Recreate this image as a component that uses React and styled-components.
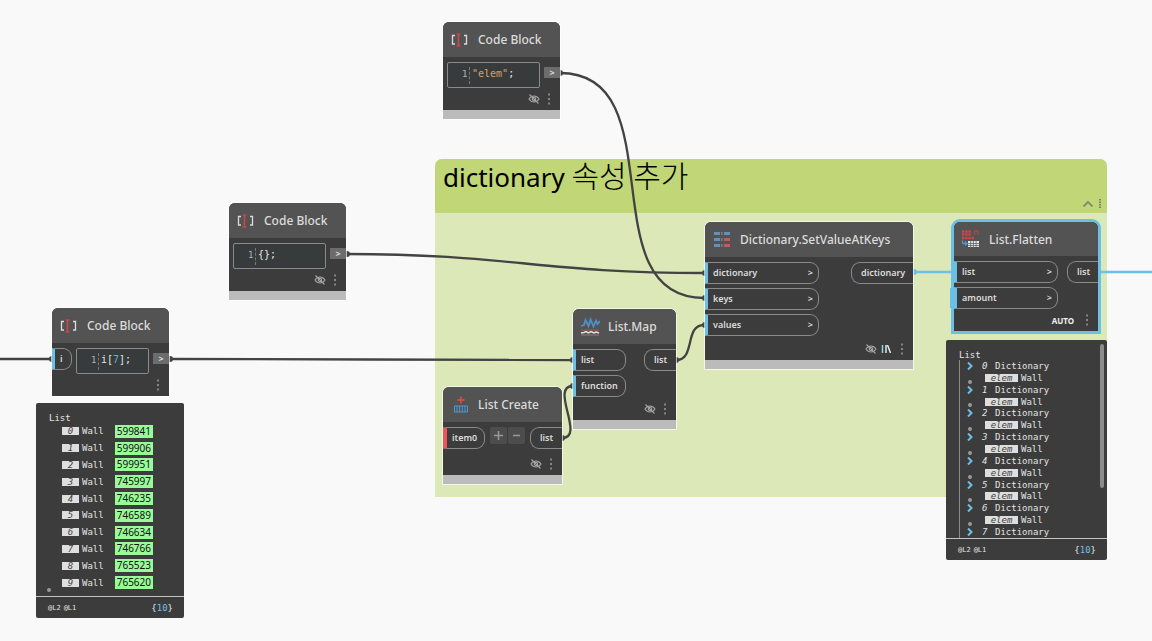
import React from "react";
import styled, { createGlobalStyle, css } from "styled-components";

const color = {
  canvas: "#f9f9f9",
  header: "#535353",
  body: "#3c3c3c",
  footer: "#bbbbbb",
  line: "#8a8a8a",
  text: "#dcdcdc",
  blue: "#6ac0e7",
  red: "#eb5555",
  wire: "#434343",
};
const sans = `"Noto Sans", "Noto Sans CJK KR", sans-serif`;
const mono = `"DejaVu Sans Mono", "Liberation Mono", monospace`;

const GlobalStyle = createGlobalStyle`
  * { box-sizing: border-box; }
  body { margin: 0; background: ${color.canvas}; font-family: ${sans}; }
  button { font: inherit; color: inherit; border: 0; padding: 0; margin: 0; background: none; cursor: pointer; }
`;

const Canvas = styled.main`
  position: relative;
  min-height: 100vh;
  overflow: hidden;
`;

const Wires = styled.svg`
  position: absolute;
  left: 0;
  top: 0;
  width: 100%;
  height: 100%;
  overflow: visible;
  fill: none;
  stroke: ${color.wire};
  stroke-width: 2.3;
  pointer-events: none;
`;

const placed = css`
  position: absolute;
  left: ${(p) => p.$x}px;
  top: ${(p) => p.$y}px;
  width: ${(p) => p.$w}px;
`;

/* ---------- group ---------- */
const GroupBox = styled.section`
  ${placed}
  border-radius: 7px 7px 0 0;
  background: #dce8b8;
`;
const GroupHeader = styled.header`
  display: flex;
  justify-content: space-between;
  height: 54px;
  padding: 0 5px 0 8px;
  border-radius: 7px 7px 0 0;
  background: #c1d676;
`;
const GroupTitle = styled.h1`
  margin: 0;
  font-size: 26px;
  font-weight: 400;
  line-height: 30px;
  color: #000;
  white-space: nowrap;
`;
const Hangul = styled.span`
  font-family: "Noto Sans CJK KR", sans-serif;
  font-size: 30px;
  font-weight: 300;
`;
const GroupTools = styled.div`
  display: flex;
  align-items: center;
  align-self: flex-end;
  gap: 4px;
  height: 18px;
`;
const GroupArea = styled.div`
  height: 284px;
`;

/* ---------- node ---------- */
const NodeBox = styled.article`
  ${placed}
  border-radius: 6px 6px 0 0;
  background: ${color.body};
  color: ${color.text};
  box-shadow: 0 0 0 ${(p) => (p.$selected ? `3px ${color.blue}` : "1px rgba(255,255,255,0.65)")};
`;
const NodeHeader = styled.header`
  display: flex;
  align-items: center;
  gap: 8px;
  height: ${(p) => (p.$selected ? 34 : 35)}px;
  padding-left: 7px;
  border-radius: 6px 6px 0 0;
  background: ${color.header};
`;
const NodeTitle = styled.h2`
  margin: 0;
  font-size: 12px;
  font-weight: 500;
  white-space: nowrap;
`;
const NodeBody = styled.div`
  display: flex;
  flex-direction: column;
  justify-content: space-between;
  min-height: ${(p) => p.$h}px;
  padding-top: 5px;
`;
const NodeFooter = styled.div`
  height: 9px;
  background: ${color.footer};
`;
const Ports = styled.div`
  display: flex;
  align-items: flex-start;
  justify-content: space-between;
`;
const PortColumn = styled.div`
  display: flex;
  flex-direction: column;
  gap: 4px;
`;
const Port = styled.button`
  display: flex;
  align-items: center;
  justify-content: space-between;
  width: ${(p) => p.$w}px;
  height: 22px;
  padding: 0 5px 0 ${(p) => (p.$out ? 9 : 5)}px;
  border: 1px solid ${color.line};
  font-size: 9px;
  font-weight: 600;
  line-height: 12px;
  white-space: nowrap;
  ${(p) =>
    p.$out
      ? css`
          border-right: 0;
          border-radius: 9px 0 0 9px;
        `
      : css`
          border-left: ${p.$wide ? 4 : 3}px solid ${p.$missing ? color.red : color.blue};
          border-radius: 0 9px 9px 0;
        `}
`;
const StatusRow = styled.div`
  display: flex;
  align-items: center;
  justify-content: flex-end;
  gap: 4px;
  height: 22px;
  padding-right: 6px;
`;
const Lacing = styled.span`
  margin-right: 4px;
  font-size: 8px;
  font-weight: 700;
  color: #f0f0f0;
`;
const IconButton = styled.button`
  display: flex;
  align-items: center;
  justify-content: center;
  color: ${(p) => p.$tone || "#a5a5a5"};
`;
const CountButtons = styled.div`
  display: flex;
  gap: 1px;
`;
const CountButton = styled.button`
  display: flex;
  align-items: center;
  justify-content: center;
  width: 17px;
  height: 17px;
  border-radius: 2px;
  background: #4d4d4d;
  color: #999;
`;

/* ---------- code block ---------- */
const CodeRow = styled.div`
  display: flex;
  align-items: flex-start;
  gap: 4px;
  padding-left: ${(p) => (p.$input ? 0 : 4)}px;
`;
const Editor = styled.div`
  display: flex;
  flex: 1;
  height: 26px;
  padding: 4px 0 3px 14px;
  border: 1px solid ${color.line};
  border-radius: 2px;
  background: #383b3b;
  font-family: ${mono};
  font-size: 10px;
  line-height: 14px;
`;
const LineNumber = styled.span`
  width: 8px;
  height: 17px;
  border-right: 1px dashed #777;
  font-size: 9px;
  color: #a9b4c0;
`;
const Code = styled.code`
  padding-left: 2px;
  font-family: inherit;
  color: #e4e4e4;
  outline: 0;
`;
const Tint = styled.span`
  color: ${(p) => p.$c};
`;
const CodeOut = styled.button`
  width: 16px;
  height: 11px;
  margin-top: 5px;
  background: #6c6c6c;
  font-size: 9px;
  font-weight: 700;
  line-height: 11px;
`;

/* ---------- preview ---------- */
const Preview = styled.section`
  ${placed}
  border-radius: 2px;
  background: ${color.body};
  color: #e4e4e4;
  font-family: ${mono};
  font-size: 9px;
  line-height: 10px;
`;
const PreviewBody = styled.div`
  position: relative;
  height: ${(p) => p.$h}px;
  padding: 10px 12px 0 13px;
  border-bottom: 1px solid #c4c4c4;
`;
const PreviewFooter = styled.footer`
  display: flex;
  align-items: center;
  justify-content: space-between;
  height: 21px;
  padding: 0 11px 0 12px;
`;
const Levels = styled.span`
  display: flex;
  gap: 3px;
  font-size: 7px;
`;
const Rows = styled.ul`
  display: flex;
  flex-direction: column;
  height: ${(p) => p.$h}px;
  margin: 0;
  padding: 0 0 0 ${(p) => p.$indent}px;
  list-style: none;
  border-left: ${(p) => (p.$ruled ? "1px solid #8a8a8a" : "0")};
`;
const Row = styled.li`
  display: flex;
  flex: 1;
  align-items: center;
  gap: 3px;
  padding-left: ${(p) => p.$indent || 0}px;
`;
const Chip = styled.span`
  width: ${(p) => p.$w}px;
  height: 8px;
  background: #dedede;
  color: #444;
  font-style: italic;
  line-height: 8px;
  text-align: center;
`;
const IdLink = styled.a`
  height: 13px;
  margin-left: 8px;
  padding: 0 2px;
  background: #98fb98;
  color: #111;
  font-family: ${sans};
  font-size: 10px;
  line-height: 13px;
  text-decoration: none;
`;
const Index = styled.em`
  width: 6px;
  margin: 0 4px 0 5px;
`;
const Bullet = styled.span`
  position: absolute;
  left: ${(p) => p.$x}px;
  bottom: ${(p) => p.$b}px;
  width: 4px;
  height: 4px;
  border-radius: 50%;
  background: #999;
`;
const NestedRow = styled(Row)`
  position: relative;
`;
const ScrollThumb = styled.div`
  position: absolute;
  top: 4px;
  right: 3px;
  width: 4px;
  height: 144px;
  border-radius: 2px;
  background: #8c8c8c;
`;

/* ---------- icons ---------- */
const Icon = ({ children, w = 20, h = 20 }) => (
  <svg width={w} height={h} viewBox={`0 0 ${w} ${h}`} fill="none" aria-hidden="true">
    {children}
  </svg>
);
const CodeBlockIcon = () => (
  <Icon>
    <path d="M5 5.500H2.500v8.500H5M14 5.500h2.500v8.500H14" stroke="#dcdcdc" strokeWidth="1.300" />
    <path d="M8.500 4v12M6.500 4h4M6.500 16h4" stroke="#c8474a" strokeWidth="1.600" />
  </Icon>
);
const ListCreateIcon = () => (
  <Icon>
    <path d="M11 1.500v7M7.500 5h7" stroke="#d24a4d" strokeWidth="1.800" />
    <path d="M4.500 11h13v6h-13zM7 11v6M9.700 11v6M12.300 11v6M15 11v6" stroke="#4f97d3" />
  </Icon>
);
const ListMapIcon = () => (
  <Icon>
    <path d="M1 9l3-1 1.500-5 3 6 2-6.500 3 7 2.500-6 1.500 3.500L20 4" stroke="#4f8fc8" strokeWidth="1.800" />
    <path d="M1 13h18" stroke="#a65b5b" />
    <path d="M1 16l3-.5 2-1 2.500 1.500 2.500-1.500 3 1.500 2-1 3 1" stroke="#e4e4e4" strokeWidth="1.500" />
    <path d="M1 18h18" stroke="#9a7676" />
  </Icon>
);
const DictionaryIcon = () => (
  <Icon>
    {[2, 8, 14].map((y) => (
      <g key={y}>
        <rect x="2" y={y} width="6" height="3" fill="#6490ba" />
        <rect x="9" y={y} width="1.500" height="3" fill="#7a8087" />
        <rect x="12" y={y} width="6" height="3" fill={y === 2 ? "#6490ba" : "#b36262"} />
      </g>
    ))}
  </Icon>
);
const FlattenIcon = () => (
  <Icon>
    <path d="M1 2.500h9M1 5.500h9M1 9h12" stroke="#cf4548" strokeWidth="2.400" strokeDasharray="2.400 .8" />
    <path d="M13.500 6V2H17v4" stroke="#a84a4c" strokeWidth="1.300" />
    <path d="M1.500 11.500v2q0 1 1 1H6M4 12.500l2 2-2 2" stroke="#4f97d3" strokeWidth="1.300" />
    <rect x="7" y="12" width="11" height="6" fill="#e8e8e8" />
    <path d="M7 14.500h11M7 16.500h11M9.700 12v6M12.400 12v6M15.100 12v6" stroke="#555" strokeWidth=".7" />
  </Icon>
);
const EyeOff = () => (
  <Icon w={12} h={12}>
    <path d="M1 6q2-3 5-3t5 3q-2 3-5 3T1 6z" stroke="currentColor" strokeWidth="1.100" />
    <circle cx="6" cy="6" r="1.700" stroke="currentColor" strokeWidth="1.100" />
    <path d="M1.500 1.500l9 9" stroke="currentColor" strokeWidth="1.100" />
  </Icon>
);
const Dots = () => (
  <Icon w={10} h={14}>
    {[1.5, 6, 10.5].map((y) => (
      <rect key={y} x="4" y={y} width="2" height="2" fill="currentColor" />
    ))}
  </Icon>
);
const LacingIcon = () => (
  <Icon w={12} h={8}>
    <path d="M1.500 0v8" stroke="#8fd3ef" strokeWidth="1.500" />
    <path d="M5 0v8M6.500 0l3 8" stroke="#f0f0f0" strokeWidth="1.400" />
  </Icon>
);

/* ---------- composed parts ---------- */
const Menu = () => (
  <IconButton aria-label="Node options" $tone="#858585">
    <Dots />
  </IconButton>
);
const Hidden = () => (
  <IconButton aria-label="Toggle preview">
    <EyeOff />
  </IconButton>
);

function Node({ x, y, w, h, title, icon, selected, footer = true, status, children }) {
  return (
    <NodeBox $x={x} $y={y} $w={w} $selected={selected}>
      <NodeHeader $selected={selected}>
        {icon}
        <NodeTitle>{title}</NodeTitle>
      </NodeHeader>
      <NodeBody $h={h}>
        {children}
        <StatusRow>
          {status}
          <Menu />
        </StatusRow>
      </NodeBody>
      {footer && <NodeFooter />}
    </NodeBox>
  );
}

function CodeBlock({ input, children, ...rest }) {
  return (
    <Node w={117} title="Code Block" icon={<CodeBlockIcon />} {...rest}>
      <CodeRow $input={input}>
        {input && <Port $w={20}>{input}</Port>}
        <Editor>
          <LineNumber>1</LineNumber>
          <Code contentEditable suppressContentEditableWarning role="textbox" aria-label="Code" spellCheck={false}>
            {children}
          </Code>
        </Editor>
        <CodeOut>&gt;</CodeOut>
      </CodeRow>
    </Node>
  );
}

const InPort = ({ name, w, wide, missing, chevron }) => (
  <Port $w={w} $wide={wide} $missing={missing}>
    <span>{name}</span>
    {chevron && <span>&gt;</span>}
  </Port>
);
const OutPort = ({ name, w }) => (
  <Port $w={w} $out>
    {name}
  </Port>
);

const PreviewFoot = () => (
  <PreviewFooter>
    <Levels>
      <span>@L2</span>
      <span>@L1</span>
    </Levels>
    <span>
      {"{"}
      <Tint $c={color.blue}>10</Tint>
      {"}"}
    </span>
  </PreviewFooter>
);

const wallIds = [599841, 599906, 599951, 745997, 746235, 746589, 746634, 746766, 765523, 765620];
const entries = [0, 1, 2, 3, 4, 5, 6, 7];

export default function App() {
  return (
    <Canvas>
      <GlobalStyle />
      <GroupBox $x={435} $y={159} $w={672}>
        <GroupHeader>
          <GroupTitle>
            dictionary <Hangul>속성 추가</Hangul>
          </GroupTitle>
          <GroupTools>
            <IconButton aria-label="Collapse group" $tone="#7d8070">
              <Icon w={12} h={8}>
                <path d="M1.500 6.500L6 2l4.500 4.500" stroke="currentColor" strokeWidth="1.700" />
              </Icon>
            </IconButton>
            <IconButton aria-label="Group options" $tone="#7d8070">
              <Icon w={4} h={10}>
                <path d="M2 0v10" stroke="currentColor" strokeWidth="2" strokeDasharray="1.500 1" />
              </Icon>
            </IconButton>
          </GroupTools>
        </GroupHeader>
        <GroupArea />
      </GroupBox>

      <Wires aria-hidden="true">
        <path d="M0 359H52" />
        <path d="M560 73C676 73 588 298 704 298" />
        <path d="M346 254C507 254 543 273 704 273" />
        <path d="M169 359C350 359 391 360 572 360" />
        <path d="M562 438C586 438 549 386 573 386" />
        <path d="M676 360C696 360 684 325 704 325" />
        <path d="M913 272H952M1100 272H4000" stroke={color.blue} />
        <g fill={color.wire} stroke="none">
          <circle cx="52" cy="359" r="3" />
          <circle cx="560" cy="73" r="3" />
          <circle cx="705" cy="298" r="3" />
          <circle cx="347" cy="254" r="3" />
          <circle cx="705" cy="273" r="3" />
          <circle cx="170" cy="359" r="3" />
          <circle cx="573" cy="360" r="3" />
          <circle cx="562" cy="438" r="3" />
          <circle cx="573" cy="386" r="3" />
          <circle cx="676" cy="360" r="3" />
          <circle cx="705" cy="325" r="3" />
          <circle cx="914" cy="272" r="3" fill={color.blue} />
          <rect x="950" y="288" width="4" height="20" fill={color.blue} />
        </g>
      </Wires>

      <CodeBlock x={443} y={22} h={53} status={<Hidden />}>
        <Tint $c="#d9a066">"elem"</Tint>;
      </CodeBlock>
      <CodeBlock x={229} y={203} h={53} status={<Hidden />}>
        {"{};"}
      </CodeBlock>
      <CodeBlock x={52} y={308} h={52} input="i" footer={false}>
        i[<Tint $c="#5fb0dd">7</Tint>];
      </CodeBlock>

      <Node x={443} y={387} w={119} h={53} title="List Create" icon={<ListCreateIcon />} status={<Hidden />}>
        <Ports>
          <InPort name="item0" w={42} wide missing />
          <CountButtons>
            <CountButton aria-label="Add item">
              <Icon w={9} h={9}>
                <path d="M4.500 0v9M0 4.500h9" stroke="currentColor" strokeWidth="1.500" />
              </Icon>
            </CountButton>
            <CountButton aria-label="Remove item">
              <Icon w={9} h={9}>
                <path d="M1 4.500h7" stroke="currentColor" strokeWidth="1.500" />
              </Icon>
            </CountButton>
          </CountButtons>
          <OutPort name="list" w={32} />
        </Ports>
      </Node>

      <Node x={573} y={309} w={103} h={76} title="List.Map" icon={<ListMapIcon />} status={<Hidden />}>
        <Ports>
          <PortColumn>
            <InPort name="list" w={53} />
            <InPort name="function" w={53} />
          </PortColumn>
          <OutPort name="list" w={32} />
        </Ports>
      </Node>

      <Node
        x={705}
        y={222}
        w={208}
        h={103}
        title="Dictionary.SetValueAtKeys"
        icon={<DictionaryIcon />}
        status={
          <>
            <Hidden />
            <LacingIcon />
          </>
        }
      >
        <Ports>
          <PortColumn>
            <InPort name="dictionary" w={114} chevron />
            <InPort name="keys" w={114} chevron />
            <InPort name="values" w={114} chevron />
          </PortColumn>
          <OutPort name="dictionary" w={62} />
        </Ports>
      </Node>

      <Node
        x={954}
        y={222}
        w={144}
        h={75}
        title="List.Flatten"
        icon={<FlattenIcon />}
        selected
        footer={false}
        status={<Lacing>AUTO</Lacing>}
      >
        <Ports>
          <PortColumn>
            <InPort name="list" w={104} chevron />
            <InPort name="amount" w={104} chevron />
          </PortColumn>
          <OutPort name="list" w={31} />
        </Ports>
      </Node>

      <Preview $x={36} $y={403} $w={148}>
        <PreviewBody $h={194}>
          List
          <Rows $h={168} $indent={13}>
            {wallIds.map((id, i) => (
              <Row key={id}>
                <Chip $w={17}>{i}</Chip>
                <span>Wall</span>
                <IdLink href={`#${id}`}>{id}</IdLink>
              </Row>
            ))}
          </Rows>
          <Bullet $x={11} $b={4} />
        </PreviewBody>
        <PreviewFoot />
      </Preview>

      <Preview $x={946} $y={340} $w={161}>
        <PreviewBody $h={199}>
          List
          <Rows $h={178} $indent={7} $ruled>
            {entries.map((n) => (
              <React.Fragment key={n}>
                <Row>
                  <IconButton aria-label={`Expand ${n}`} $tone={color.blue}>
                    <Icon w={7} h={8}>
                      <path d="M1 .5L4.500 4 1 7.500" stroke="currentColor" strokeWidth="2" />
                    </Icon>
                  </IconButton>
                  <Index>{n}</Index>
                  <span>Dictionary</span>
                </Row>
                {n < 7 && (
                  <NestedRow $indent={18}>
                    <Bullet $x={1} $b={0} />
                    <Chip $w={33}>elem</Chip>
                    <span>Wall</span>
                  </NestedRow>
                )}
              </React.Fragment>
            ))}
          </Rows>
          <ScrollThumb />
        </PreviewBody>
        <PreviewFoot />
      </Preview>
    </Canvas>
  );
}
